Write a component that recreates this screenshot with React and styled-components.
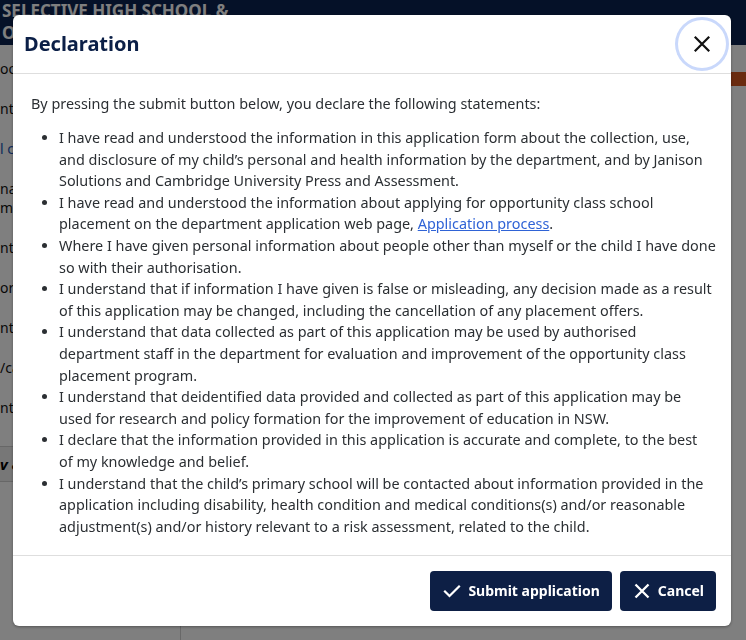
import React from 'react'
import styled, { createGlobalStyle } from 'styled-components'

const GlobalStyle = createGlobalStyle`
  html, body {
    margin: 0;
    padding: 0;
    background: #ffffff;
    font-family: "Noto Sans", "Liberation Sans", sans-serif;
    overflow: hidden;
  }
`

const Page = styled.div`
  width: 746px;
  height: 640px;
  background: #fff;
  display: flex;
  flex-direction: column;
`

const Masthead = styled.header`
  height: 45px;
  background: #0b2350;
  color: #ffffff;
  font-weight: 700;
  font-size: 17px;
  line-height: 22px;
  padding-left: 2px;
  overflow: hidden;
`

const Body = styled.div`
  flex: 1;
  display: flex;
`

const Sidebar = styled.nav`
  width: 180px;
  display: flex;
  flex-direction: column;
  padding-top: 14px;
  border-right: 1px solid #d0d0d0;
`

const NavItem = styled.div`
  font-size: 14px;
  line-height: 19px;
  color: ${p => (p.$link ? '#2155b5' : '#111')};
  padding-bottom: ${p => (p.$tight ? '0' : '21px')};
  white-space: nowrap;
`

const NavCurrent = styled.div`
  margin-top: 8px;
  height: 34px;
  background: #efefef;
  border-top: 1px solid #cfcfcf;
  border-bottom: 1px solid #cfcfcf;
  font-weight: 700;
  font-style: italic;
  font-size: 15px;
  line-height: 34px;
`

const Main = styled.main`
  flex: 1;
  display: flex;
  flex-direction: column;
  align-items: flex-end;
  padding-top: 27px;
`

const Banner = styled.div`
  width: 40px;
  height: 14px;
  background: #d4561f;
`

const Backdrop = styled.div`
  position: fixed;
  inset: 0;
  background: rgba(0, 0, 0, 0.5);
  display: flex;
  align-items: center;
  justify-content: center;
`

const Modal = styled.div`
  width: 718px;
  height: 611px;
  margin-left: -2px;
  background: #ffffff;
  border-radius: 6px;
  box-shadow: 0 1px 3px rgba(0, 0, 0, 0.35);
  display: flex;
  flex-direction: column;
  overflow: hidden;
`

const ModalHeader = styled.div`
  height: 58px;
  flex-shrink: 0;
  display: flex;
  align-items: center;
  justify-content: space-between;
  padding: 0 5px 0 11px;
  border-bottom: 1px solid #dedede;
`

const Title = styled.h2`
  margin: 0;
  font-size: 20px;
  font-weight: 700;
  color: #0b1f47;
`

const CloseButton = styled.button`
  width: 48px;
  height: 48px;
  border-radius: 50%;
  border: none;
  background: #fff;
  box-shadow: 0 0 0 3px #c9d8fb;
  display: flex;
  align-items: center;
  justify-content: center;
  padding: 0;
  color: #111;
`

const ModalBody = styled.div`
  flex: 1;
  padding: 19px 13px 0 18px;
  font-size: 14.4px;
  line-height: 21.6px;
  color: #2b2f33;
`

const Intro = styled.p`
  margin: 0 0 13px 0;
`

const List = styled.ul`
  margin: 0;
  padding-left: 28px;
`

const Link = styled.a`
  color: #2f63d6;
  text-decoration: underline;
`

const ModalFooter = styled.div`
  flex-shrink: 0;
  border-top: 1px solid #dedede;
  display: flex;
  justify-content: flex-end;
  gap: 8px;
  padding: 15px 15px 15px 0;
`

const Button = styled.button`
  height: 40px;
  display: flex;
  align-items: center;
  gap: 7px;
  padding: 0 12px 0 13px;
  background: #0d1f45;
  color: #ffffff;
  border: none;
  border-radius: 4px;
  font-family: inherit;
  font-size: 14px;
  font-weight: 700;
`

const CheckIcon = () => (
  <svg width="18" height="18" viewBox="0 0 18 18" fill="none" stroke="currentColor" strokeWidth="2.2" strokeLinecap="square">
    <path d="M2 9.5l4.5 4.5L16 4.5" />
  </svg>
)

const CrossIcon = ({ box = 18, weight = 2.3 }) => (
  <svg width={box} height={box} viewBox="0 0 18 18" fill="none" stroke="currentColor" strokeWidth={weight}>
    <path d="M2.5 2.5l13 13M15.5 2.5l-13 13" />
  </svg>
)

// \u00A0 keeps a few word pairs together so lines break where the original does
const statements = [
  'I have read and understood the information in this application form about the collection, use, and\u00A0disclosure of my child\u2019s personal and health information by the department, and by Janison Solutions and Cambridge University Press and Assessment.',
  null,
  'Where I have given personal information about people other than myself or the child I have done so with their authorisation.',
  'I understand that if information I have given is false or misleading, any decision made as a result of this application may be changed, including the cancellation of any placement offers.',
  'I understand that data collected as part of this application may be used by authorised department staff in the department for evaluation and improvement of the opportunity class placement program.',
  'I understand that deidentified data provided and collected as part of this application may be used\u00A0for research and policy formation for the improvement of education in NSW.',
  'I declare that the information provided in this application is accurate and complete, to the best of\u00A0my knowledge and belief.',
  'I understand that the child\u2019s primary school will be contacted about information provided in the application including disability, health condition and medical conditions(s) and/or reasonable adjustment(s) and/or history relevant to a risk assessment, related to the child.',
]

const navItems = [
  { text: 'ool details' },
  { text: 'nt details' },
  { text: 'l contacts', link: true },
  { text: 'nal', tight: true },
  { text: 'ment' },
  { text: 'nt' },
  { text: 'ores' },
  { text: 'nt' },
  { text: '/carer' },
  { text: 'nt' },
]

const App = () => {
  return (
    <>
      <GlobalStyle />
      <Page>
        <Masthead>
          SELECTIVE HIGH SCHOOL &amp;
          <br />
          OPPORTUNITY CLASS PLACEMENT
        </Masthead>
        <Body>
          <Sidebar>
            {navItems.map((item, i) => (
              <NavItem key={i} $link={item.link} $tight={item.tight}>
                {item.text}
              </NavItem>
            ))}
            <NavCurrent>v &amp; submit</NavCurrent>
          </Sidebar>
          <Main>
            <Banner />
          </Main>
        </Body>
      </Page>
      <Backdrop>
        <Modal role="dialog" aria-labelledby="decl-title">
          <ModalHeader>
            <Title id="decl-title">Declaration</Title>
            <CloseButton aria-label="Close">
              <CrossIcon box={20} weight={2} />
            </CloseButton>
          </ModalHeader>
          <ModalBody>
            <Intro>By pressing the submit button below, you declare the following statements:</Intro>
            <List>
              {statements.map((s, i) =>
                s ? (
                  <li key={i}>{s}</li>
                ) : (
                  <li key={i}>
                    I have read and understood the information about applying for opportunity class school
                    placement on the department application web page, <Link href="#">Application process</Link>.
                  </li>
                )
              )}
            </List>
          </ModalBody>
          <ModalFooter>
            <Button>
              <CheckIcon />
              Submit application
            </Button>
            <Button>
              <CrossIcon />
              Cancel
            </Button>
          </ModalFooter>
        </Modal>
      </Backdrop>
    </>
  )
}

export default App
